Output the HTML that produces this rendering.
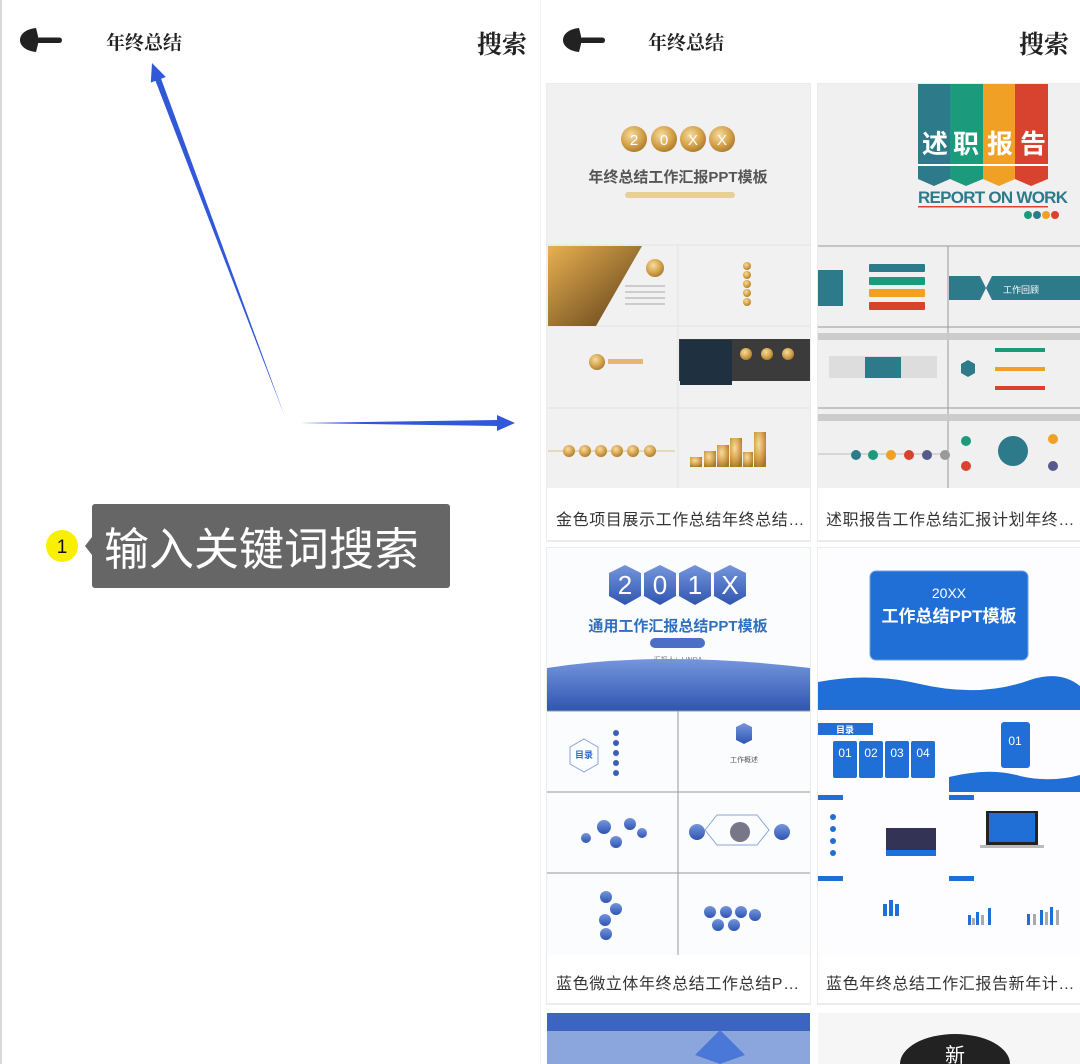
<!DOCTYPE html>
<html><head><meta charset="utf-8"><style>
html,body{margin:0;padding:0;background:#fff;}
body{width:1080px;height:1064px;position:relative;overflow:hidden;font-family:"Liberation Sans","Noto Sans CJK SC",sans-serif;}
.hdr{position:absolute;font-family:"Liberation Serif","Noto Serif CJK SC",serif;font-weight:bold;color:#222;}
.cap{position:absolute;font-size:16px;color:#333;white-space:nowrap;letter-spacing:0.6px;width:254px;overflow:hidden;}
</style></head><body>
<div style="position:absolute;left:0;top:0;width:2px;height:1064px;background:#d8d8d8"></div>
<div style="position:absolute;left:540px;top:0;width:1px;height:1064px;background:#f2f2f2"></div>

<svg style="position:absolute;left:0;top:0" width="540" height="600">
<path d="M36 28 C26 29 20 34 20 40 C20 46 26 51 36 52 L38 44 L38 36 Z" fill="#222"/>
<rect x="32" y="37.5" width="30" height="5.5" rx="2.7" fill="#222"/>
<polygon points="285,417 161.1,78.7 165.8,77 152,63 150.8,82.6 155.5,80.9" fill="#3158d8"/>
<polygon points="300,423 497,420 497,415 515,423 497,431 497,426" fill="#3158d8"/>
<circle cx="62" cy="546" r="16" fill="#f8f000"/>
<text x="62" y="553" font-size="19" text-anchor="middle" fill="#111" font-family="Liberation Sans">1</text>
<polygon points="92,537 85,546 92,555" fill="#666"/>
</svg>
<div class="hdr" style="left:106px;top:28px;font-size:19px">年终总结</div>
<div class="hdr" style="left:477px;top:25px;font-size:25px">搜索</div>
<div style="position:absolute;left:92px;top:504px;width:358px;height:84px;background:#666;border-radius:3px;"></div>
<div style="position:absolute;left:104px;top:517px;font-size:45px;color:#fff;line-height:58px;font-family:'Noto Sans CJK SC',sans-serif">输入关键词搜索</div>

<svg style="position:absolute;left:543px;top:0" width="80" height="80">
<path d="M36 28 C26 29 20 34 20 40 C20 46 26 51 36 52 L38 44 L38 36 Z" fill="#222"/>
<rect x="32" y="37.5" width="30" height="5.5" rx="2.7" fill="#222"/>
</svg>
<div class="hdr" style="left:648px;top:28px;font-size:19px">年终总结</div>
<div class="hdr" style="left:1019px;top:25px;font-size:25px">搜索</div>

<svg style="position:absolute;left:0;top:0" width="1080" height="1064" font-family="Liberation Sans, Noto Sans CJK SC, sans-serif">
<defs>
<radialGradient id="gold" cx="40%" cy="35%" r="70%"><stop offset="0" stop-color="#f6dca0"/><stop offset="0.6" stop-color="#d4a24a"/><stop offset="1" stop-color="#a8772a"/></radialGradient>
<linearGradient id="blu" x1="0" y1="0" x2="0" y2="1"><stop offset="0" stop-color="#7596dc"/><stop offset="1" stop-color="#2f55b0"/></linearGradient>
<linearGradient id="city" x1="0" y1="0" x2="1" y2="1"><stop offset="0" stop-color="#e8b050"/><stop offset="1" stop-color="#5a3c18"/></linearGradient>
</defs>
<rect x="546" y="83" width="265" height="459" fill="#ececec"/>
<rect x="817" y="83" width="264" height="459" fill="#ececec"/>
<rect x="546" y="547" width="265" height="458" fill="#ececec"/>
<rect x="817" y="547" width="264" height="458" fill="#ececec"/>
<rect x="547" y="84" width="263" height="456" fill="#fff"/>
<rect x="818" y="84" width="262" height="456" fill="#fff"/>
<rect x="547" y="548" width="263" height="455" fill="#fff"/>
<rect x="818" y="548" width="262" height="455" fill="#fff"/>

<!-- card 1 -->
<rect x="547" y="84" width="263" height="404" fill="#f1f1f1"/>
<g fill="url(#gold)"><circle cx="634" cy="139" r="13"/><circle cx="664" cy="139" r="13"/><circle cx="693" cy="139" r="13"/><circle cx="722" cy="139" r="13"/></g>
<g fill="#fff" font-size="15" text-anchor="middle"><text x="634" y="145">2</text><text x="664" y="145">0</text><text x="693" y="145">X</text><text x="722" y="145">X</text></g>
<text x="678" y="182" font-size="15" font-weight="bold" fill="#555" text-anchor="middle">年终总结工作汇报PPT模板</text>
<rect x="625" y="192" width="110" height="6" rx="3" fill="#e8cf9a"/>
<line x1="547" y1="245" x2="810" y2="245" stroke="#e4e4e4"/>
<line x1="678" y1="245" x2="678" y2="488" stroke="#e4e4e4"/>
<line x1="547" y1="326" x2="810" y2="326" stroke="#e4e4e4"/>
<line x1="547" y1="408" x2="810" y2="408" stroke="#e4e4e4"/>
<polygon points="548,246 642,246 596,326 548,326" fill="url(#city)"/>
<circle cx="655" cy="268" r="9" fill="url(#gold)"/>
<g fill="#ccc"><rect x="625" y="285" width="40" height="2"/><rect x="625" y="291" width="40" height="2"/><rect x="625" y="297" width="40" height="2"/><rect x="625" y="303" width="40" height="2"/></g>
<rect x="712" y="262" width="22" height="44" fill="none" stroke="#eee"/>
<g fill="url(#gold)"><circle cx="747" cy="266" r="4"/><circle cx="747" cy="275" r="4"/><circle cx="747" cy="284" r="4"/><circle cx="747" cy="293" r="4"/><circle cx="747" cy="302" r="4"/></g>
<circle cx="597" cy="362" r="8" fill="url(#gold)"/>
<rect x="608" y="359" width="35" height="5" fill="#e0b870"/>
<rect x="679" y="339" width="131" height="42" fill="#3b3b3b"/>
<rect x="680" y="340" width="52" height="45" fill="#1f3040"/>
<g fill="url(#gold)"><circle cx="746" cy="354" r="6"/><circle cx="767" cy="354" r="6"/><circle cx="788" cy="354" r="6"/></g>
<line x1="548" y1="451" x2="675" y2="451" stroke="#e0c080"/>
<g fill="url(#gold)"><circle cx="569" cy="451" r="6"/><circle cx="585" cy="451" r="6"/><circle cx="601" cy="451" r="6"/><circle cx="617" cy="451" r="6"/><circle cx="633" cy="451" r="6"/><circle cx="650" cy="451" r="6"/></g>
<g fill="url(#gold)"><rect x="690" y="457" width="12" height="10"/><rect x="704" y="451" width="12" height="16"/><rect x="717" y="445" width="12" height="22"/><rect x="730" y="438" width="12" height="29"/><rect x="743" y="452" width="10" height="15"/><rect x="754" y="432" width="12" height="35"/></g>

<!-- card 2 -->
<rect x="818" y="84" width="262" height="404" fill="#f0f0f0"/>
<polygon points="918,84 950,84 950,179 934,186 918,179" fill="#2d7a8a"/>
<polygon points="950,84 983,84 983,179 966,186 950,179" fill="#1c9a7c"/>
<polygon points="983,84 1015,84 1015,179 999,186 983,179" fill="#f0a024"/>
<polygon points="1015,84 1048,84 1048,179 1031,186 1015,179" fill="#d8432f"/>
<rect x="918" y="164" width="130" height="2" fill="#fff"/>
<g fill="#fff" font-size="26" font-weight="bold" text-anchor="middle" font-family="Noto Sans CJK SC, sans-serif"><text x="935" y="153">述</text><text x="966" y="153">职</text><text x="1000" y="153">报</text><text x="1033" y="153">告</text></g>
<text x="918" y="203" font-size="17" font-weight="bold" fill="#2d7a8a" textLength="150">REPORT ON WORK</text>
<rect x="918" y="206" width="130" height="1.5" fill="#d8432f"/>
<g><circle cx="1028" cy="215" r="4" fill="#1c9a7c"/><circle cx="1037" cy="215" r="4" fill="#2d7a8a"/><circle cx="1046" cy="215" r="4" fill="#f0a024"/><circle cx="1055" cy="215" r="4" fill="#d8432f"/></g>
<line x1="818" y1="246" x2="1080" y2="246" stroke="#999"/>
<line x1="948" y1="246" x2="948" y2="488" stroke="#999"/>
<line x1="818" y1="327" x2="1080" y2="327" stroke="#999"/>
<line x1="818" y1="408" x2="1080" y2="408" stroke="#999"/>
<rect x="818" y="270" width="25" height="36" fill="#2d7a8a"/>
<rect x="869" y="264" width="56" height="8" rx="1" fill="#2d7a8a"/>
<rect x="869" y="277" width="56" height="8" rx="1" fill="#1c9a7c"/>
<rect x="869" y="289" width="56" height="8" rx="1" fill="#f0a024"/>
<rect x="869" y="302" width="56" height="8" rx="1" fill="#d8432f"/>
<polygon points="949,276 980,276 986,288 980,300 949,300" fill="#2d7a8a"/>
<polygon points="992,276 1080,276 1080,300 992,300 986,288" fill="#2d7a8a"/>
<text x="1003" y="293" font-size="9" fill="#fff">工作回顾</text>
<rect x="818" y="333" width="130" height="7" fill="#ccc"/><rect x="949" y="333" width="131" height="7" fill="#ccc"/>
<rect x="818" y="414" width="130" height="7" fill="#ccc"/><rect x="949" y="414" width="131" height="7" fill="#ccc"/>
<rect x="829" y="356" width="108" height="22" fill="#ddd"/><rect x="865" y="357" width="36" height="21" fill="#2d7a8a"/>
<rect x="995" y="348" width="50" height="4" fill="#1c9a7c"/><rect x="995" y="367" width="50" height="4" fill="#f0a024"/><rect x="995" y="386" width="50" height="4" fill="#d8432f"/>
<polygon points="961,364 968,360 975,364 975,373 968,377 961,373" fill="#2d7a8a"/>
<line x1="818" y1="454" x2="946" y2="454" stroke="#bbb"/>
<g><circle cx="856" cy="455" r="5" fill="#2d7a8a"/><circle cx="873" cy="455" r="5" fill="#1c9a7c"/><circle cx="891" cy="455" r="5" fill="#f0a024"/><circle cx="909" cy="455" r="5" fill="#d8432f"/><circle cx="927" cy="455" r="5" fill="#555a8a"/><circle cx="945" cy="455" r="5" fill="#999"/></g>
<circle cx="1013" cy="451" r="15" fill="#2d7a8a"/>
<circle cx="966" cy="441" r="5" fill="#1c9a7c"/><circle cx="966" cy="466" r="5" fill="#d8432f"/><circle cx="1053" cy="439" r="5" fill="#f0a024"/><circle cx="1053" cy="466" r="5" fill="#555a8a"/>

<!-- card 3 -->
<rect x="547" y="548" width="263" height="407" fill="#fbfcfe"/>
<g fill="url(#blu)">
<polygon points="625,565 641,573 641,596 625,605 609,596 609,573"/>
<polygon points="660,565 676,573 676,596 660,605 644,596 644,573"/>
<polygon points="695,565 711,573 711,596 695,605 679,596 679,573"/>
<polygon points="730,565 746,573 746,596 730,605 714,596 714,573"/>
</g>
<g fill="#fff" font-size="26" text-anchor="middle"><text x="625" y="594">2</text><text x="660" y="594">0</text><text x="695" y="594">1</text><text x="730" y="594">X</text></g>
<text x="678" y="631" font-size="15" font-weight="bold" fill="#2f6fbf" text-anchor="middle">通用工作汇报总结PPT模板</text>
<rect x="650" y="638" width="55" height="10" rx="5" fill="#4a6fc4"/>
<text x="678" y="662" font-size="7" fill="#777" text-anchor="middle">汇报人：LINDA</text>
<path d="M547 668 Q660 650 810 668 L810 711 L547 711 Z" fill="url(#blu)"/>
<line x1="547" y1="711" x2="810" y2="711" stroke="#999"/>
<line x1="678" y1="711" x2="678" y2="955" stroke="#999"/>
<line x1="547" y1="792" x2="810" y2="792" stroke="#999"/>
<line x1="547" y1="873" x2="810" y2="873" stroke="#999"/>
<polygon points="584,739 598,747 598,764 584,772 570,764 570,747" fill="none" stroke="#8aa4d8"/>
<text x="584" y="758" font-size="9" fill="#2f6fbf" text-anchor="middle" font-weight="bold">目录</text>
<g fill="#3a5fb8"><circle cx="616" cy="733" r="3"/><circle cx="616" cy="743" r="3"/><circle cx="616" cy="753" r="3"/><circle cx="616" cy="763" r="3"/><circle cx="616" cy="773" r="3"/></g>
<polygon points="736,727 744,723 752,727 752,740 744,744 736,740" fill="url(#blu)"/>
<text x="744" y="762" font-size="7" fill="#555" text-anchor="middle">工作概述</text>
<g fill="url(#blu)"><circle cx="604" cy="827" r="7"/><circle cx="630" cy="824" r="6"/><circle cx="616" cy="842" r="6"/><circle cx="586" cy="838" r="5"/><circle cx="642" cy="833" r="5"/></g>
<polygon points="705,830 717,815 757,815 769,830 757,845 717,845" fill="none" stroke="#8aa4d8"/>
<circle cx="697" cy="832" r="8" fill="url(#blu)"/><circle cx="782" cy="832" r="8" fill="url(#blu)"/><circle cx="740" cy="832" r="10" fill="#778"/>
<g fill="url(#blu)"><circle cx="606" cy="897" r="6"/><circle cx="605" cy="920" r="6"/><circle cx="616" cy="909" r="6"/><circle cx="606" cy="934" r="6"/></g>
<g fill="url(#blu)"><circle cx="710" cy="912" r="6"/><circle cx="726" cy="912" r="6"/><circle cx="741" cy="912" r="6"/><circle cx="755" cy="915" r="6"/><circle cx="718" cy="925" r="6"/><circle cx="734" cy="925" r="6"/></g>

<!-- card 4 -->
<rect x="818" y="548" width="262" height="407" fill="#fdfdff"/>
<rect x="870" y="571" width="158" height="89" rx="6" fill="#1f6fd6" stroke="#6fa0e8"/>
<text x="949" y="598" font-size="14" fill="#fff" text-anchor="middle">20XX</text>
<text x="949" y="622" font-size="17" font-weight="bold" fill="#fff" text-anchor="middle">工作总结PPT模板</text>
<path d="M818 682 Q870 672 920 684 Q980 698 1030 680 Q1060 670 1080 686 L1080 710 L818 710 Z" fill="#1f6fd6"/>
<rect x="818" y="723" width="55" height="12" fill="#1f6fd6"/><text x="836" y="733" font-size="9" fill="#fff" font-weight="bold">目录</text>
<g fill="#1f6fd6"><rect x="833" y="741" width="24" height="37" rx="2"/><rect x="859" y="741" width="24" height="37" rx="2"/><rect x="885" y="741" width="24" height="37" rx="2"/><rect x="911" y="741" width="24" height="37" rx="2"/></g>
<g fill="#fff" font-size="12" text-anchor="middle"><text x="845" y="757">01</text><text x="871" y="757">02</text><text x="897" y="757">03</text><text x="923" y="757">04</text></g>
<rect x="1001" y="722" width="29" height="46" rx="3" fill="#1f6fd6"/><text x="1015" y="745" font-size="12" fill="#fff" text-anchor="middle">01</text>
<path d="M949 777 Q990 767 1020 776 Q1050 783 1080 775 L1080 792 L949 792 Z" fill="#1f6fd6"/>
<rect x="818" y="795" width="25" height="5" fill="#1f6fd6"/><rect x="949" y="795" width="25" height="5" fill="#1f6fd6"/>
<rect x="818" y="876" width="25" height="5" fill="#1f6fd6"/><rect x="949" y="876" width="25" height="5" fill="#1f6fd6"/>
<g fill="#1f6fd6"><circle cx="833" cy="817" r="3"/><circle cx="833" cy="829" r="3"/><circle cx="833" cy="841" r="3"/><circle cx="833" cy="853" r="3"/></g>
<rect x="886" y="828" width="50" height="22" fill="#335"/><rect x="886" y="850" width="50" height="6" fill="#1f6fd6"/>
<rect x="986" y="811" width="52" height="34" fill="#222"/><rect x="989" y="813" width="46" height="29" fill="#1f6fd6"/><rect x="980" y="845" width="64" height="3" fill="#bbb"/>
<g fill="#1f6fd6"><rect x="883" y="904" width="4" height="12"/><rect x="889" y="900" width="4" height="16"/><rect x="895" y="904" width="4" height="12"/></g>
<g fill="#1f6fd6"><rect x="968" y="915" width="3" height="10"/><rect x="976" y="912" width="3" height="13"/><rect x="988" y="908" width="3" height="17"/><rect x="1027" y="914" width="3" height="11"/><rect x="1040" y="910" width="3" height="15"/><rect x="1050" y="907" width="3" height="18"/></g>
<g fill="#aaa"><rect x="972" y="918" width="3" height="7"/><rect x="981" y="915" width="3" height="10"/><rect x="1033" y="914" width="3" height="11"/><rect x="1045" y="912" width="3" height="13"/><rect x="1056" y="910" width="3" height="15"/></g>

<!-- row 3 -->
<rect x="547" y="1013" width="263" height="51" fill="#8aa6dc"/>
<rect x="547" y="1013" width="263" height="18" fill="#3d64c0"/>
<polygon points="720,1030 745,1055 720,1064 695,1055" fill="#4a78d8"/>
<rect x="818" y="1013" width="262" height="51" fill="#f6f6f6"/>
<ellipse cx="955" cy="1064" rx="55" ry="30" fill="#222"/>
<text x="955" y="1062" font-size="20" fill="#fff" text-anchor="middle">新</text>
</svg>
<div class="cap" style="left:556px;top:506px">金色项目展示工作总结年终总结…</div>
<div class="cap" style="left:826px;top:506px">述职报告工作总结汇报计划年终…</div>
<div class="cap" style="left:556px;top:970px">蓝色微立体年终总结工作总结P…</div>
<div class="cap" style="left:826px;top:970px">蓝色年终总结工作汇报告新年计…</div>
</body></html>
